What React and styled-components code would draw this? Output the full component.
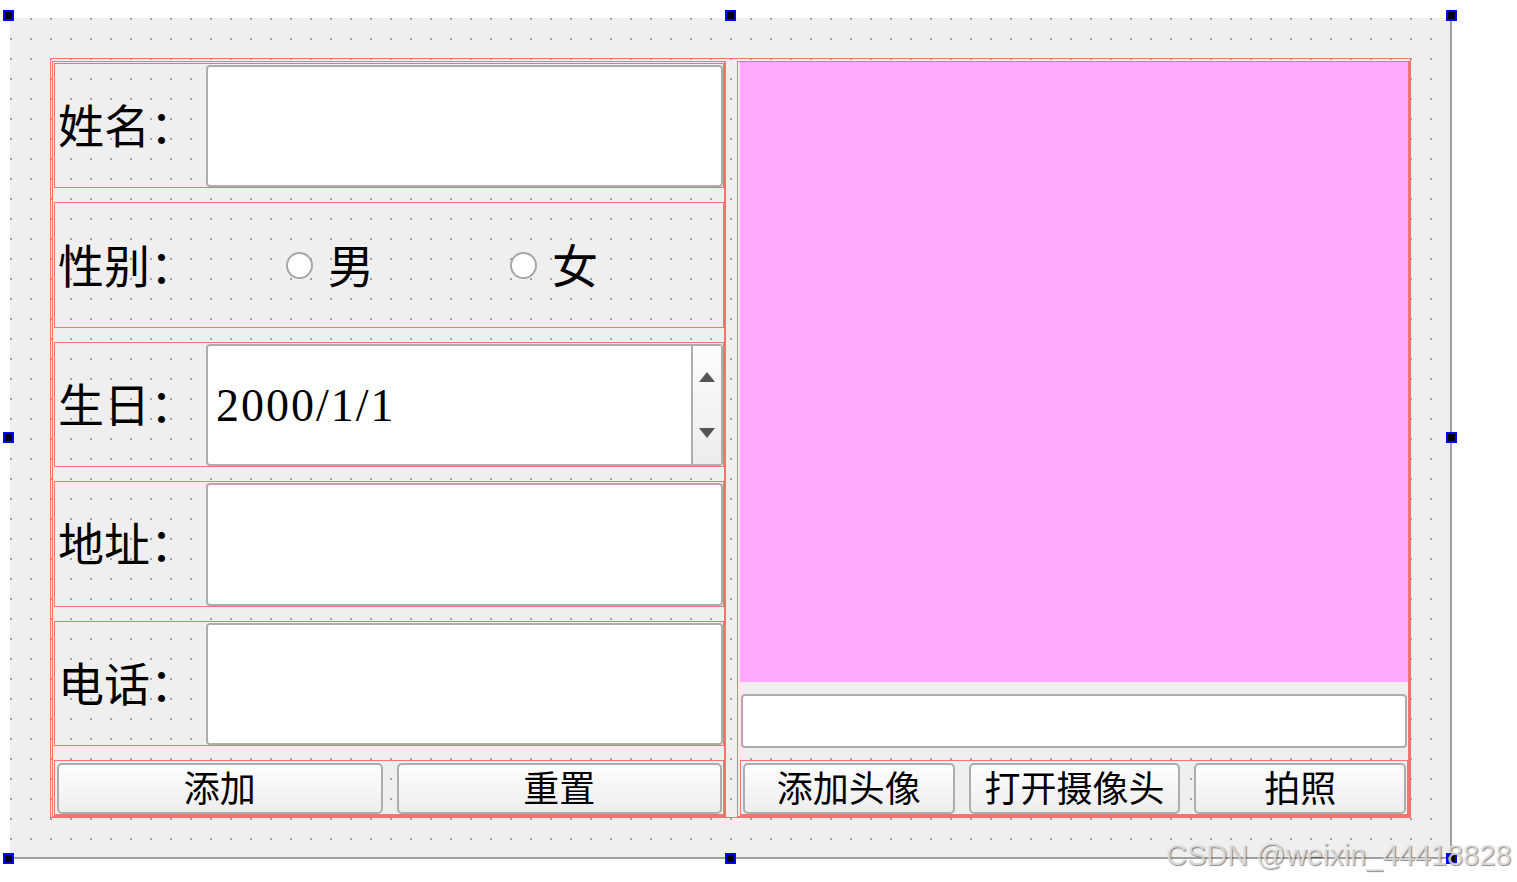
import React from 'react'
import styled, { createGlobalStyle } from 'styled-components'

const RED = '#f87272'
const EDGE = '#adadad'

const GlobalStyle = createGlobalStyle`
  body {
    margin: 0;
    background: #fff;
    font-family: "Noto Sans CJK SC", "Noto Sans", sans-serif;
  }
`

const Stage = styled.div`
  position: relative;
  width: 1517px;
  height: 882px;
  box-sizing: border-box;
  padding: 18px 0 0 10px;
  overflow: hidden;
`

const Form = styled.div`
  width: 1442px;
  height: 841px;
  box-sizing: border-box;
  padding: 40px 0 0 40px;
  border-right: 2px solid #a0a0a0;
  border-bottom: 2px solid #a0a0a0;
  background:
    conic-gradient(at 2px 2px, transparent 75%, #a0a0a0 0) 0 0 / 20px 20px,
    #efefef;
`

const TopLayout = styled.div`
  width: 1361px;
  height: 760px;
  box-sizing: border-box;
  border: 1px solid ${RED};
  padding: 2px 0 0 1px;
  display: grid;
  grid-template-columns: 674px 673px;
  column-gap: 11px;
`

const LeftColumn = styled.div`
  box-sizing: border-box;
  border: 1px solid ${RED};
  border-right-width: 2px;
  padding: 1px 0 0 1px;
  display: flex;
  flex-direction: column;
  gap: 14px;
  min-height: 0;
`

const RightColumn = styled.div`
  box-sizing: border-box;
  border: 1px solid ${RED};
  border-right-width: 2px;
  padding: 0 0 0 2px;
  display: flex;
  flex-direction: column;
  gap: 12px;
  min-height: 0;
`

const FieldRow = styled.div`
  flex: 1;
  min-height: 0;
  box-sizing: border-box;
  border: 1px solid ${RED};
  padding: 1px 0 0 0;
  display: grid;
  grid-template-columns: ${p => p.$columns || '151px 1fr'};
  align-items: ${p => (p.$center ? 'center' : 'stretch')};
`

const Label = styled.div`
  display: flex;
  align-items: center;
  padding: 0 0 6px 3px;
  font-size: 46px;
  line-height: 1;
  color: #000;
`

const TextBox = styled.div`
  box-sizing: border-box;
  background: #fff;
  border: 2px solid ${EDGE};
  border-radius: 4px;
`

const SpinBox = styled(TextBox)`
  display: flex;
`

const SpinValue = styled.div`
  flex: 1;
  display: flex;
  align-items: center;
  padding-left: 8px;
  font-family: "Liberation Serif", serif;
  font-size: 46px;
  letter-spacing: 2px;
  color: #000;
`

const SpinButtons = styled.div`
  width: 28px;
  border-left: 2px solid ${EDGE};
  background: linear-gradient(#fdfdfd, #ececec);
  display: flex;
  flex-direction: column;
`

const SpinHalf = styled.div`
  flex: 1;
  display: flex;
  align-items: center;
  justify-content: center;
`

const Arrow = styled.div`
  width: 0;
  height: 0;
  border-left: 8.5px solid transparent;
  border-right: 8.5px solid transparent;
  ${p => (p.$down
    ? `border-top: 10px solid #555; margin-bottom: 4px;`
    : `border-bottom: 10px solid #555; margin-top: 4px;`)}
`

const RadioOption = styled.div`
  display: flex;
  align-items: center;
  gap: 15px;
  padding-left: 7px;
  font-size: 46px;
  line-height: 1;
`

const RadioText = styled.span`
  padding-bottom: 6px;
`

const RadioCircle = styled.span`
  width: 27px;
  height: 27px;
  box-sizing: border-box;
  border-radius: 50%;
  border: 2px solid #a6a6a6;
  background: #fff;
  flex: none;
`

const ButtonRow = styled.div`
  flex: none;
  height: 56px;
  box-sizing: border-box;
  border: 1px solid ${RED};
  border-bottom-width: 2px;
  padding: 2px 1px 0 2px;
  display: grid;
  grid-template-columns: repeat(${p => p.$count}, 1fr);
  gap: 14px;
`

const PushButton = styled.button`
  box-sizing: border-box;
  border: 2px solid ${EDGE};
  border-radius: 5px;
  background: linear-gradient(#fefefe, #ededed);
  padding: 0 0 5px;
  font-family: "Noto Sans CJK SC", sans-serif;
  font-size: 36px;
  line-height: 1;
  color: #000;
`

const Preview = styled.div`
  flex: 1;
  background: #ffaaff;
`

const LineBox = styled(TextBox)`
  flex: none;
  height: 54px;
  margin: 0 1px;
`

const Handle = styled.div`
  position: absolute;
  left: ${p => p.$x - 5}px;
  top: ${p => p.$y - 5}px;
  width: 11px;
  height: 11px;
  box-sizing: border-box;
  background: #000;
  border: 2px solid #0000ff;
`

const Watermark = styled.div`
  position: absolute;
  left: 1166px;
  top: 841px;
  font-family: "Liberation Sans", Arial, sans-serif;
  font-size: 29px;
  line-height: 29px;
  white-space: nowrap;
  color: rgba(225, 225, 225, 0.85);
  text-shadow: 1px 1px 1px rgba(0, 0, 0, 0.45);
`

const handles = [
  [8, 15], [730, 15], [1451, 15],
  [8, 437], [1451, 437],
  [8, 858], [730, 858], [1451, 858]
]

const Field = ({ label, children }) => (
  <FieldRow>
    <Label>{label}</Label>
    {children || <TextBox />}
  </FieldRow>
)

const App = () => (
  <Stage>
    <GlobalStyle />
    <Form>
      <TopLayout>
        <LeftColumn>
          <Field label="姓名：" />
          <FieldRow $columns="224px 224px 1fr" $center>
            <Label>性别：</Label>
            <RadioOption><RadioCircle /><RadioText>男</RadioText></RadioOption>
            <RadioOption><RadioCircle /><RadioText>女</RadioText></RadioOption>
          </FieldRow>
          <Field label="生日：">
            <SpinBox>
              <SpinValue>2000/1/1</SpinValue>
              <SpinButtons>
                <SpinHalf><Arrow /></SpinHalf>
                <SpinHalf><Arrow $down /></SpinHalf>
              </SpinButtons>
            </SpinBox>
          </Field>
          <Field label="地址：" />
          <Field label="电话：" />
          <ButtonRow $count={2}>
            <PushButton>添加</PushButton>
            <PushButton>重置</PushButton>
          </ButtonRow>
        </LeftColumn>
        <RightColumn>
          <Preview />
          <LineBox />
          <ButtonRow $count={3}>
            <PushButton>添加头像</PushButton>
            <PushButton>打开摄像头</PushButton>
            <PushButton>拍照</PushButton>
          </ButtonRow>
        </RightColumn>
      </TopLayout>
    </Form>
    {handles.map(([x, y]) => <Handle key={`${x}-${y}`} $x={x} $y={y} />)}
    <Watermark>CSDN @weixin_44418828</Watermark>
  </Stage>
)

export default App
